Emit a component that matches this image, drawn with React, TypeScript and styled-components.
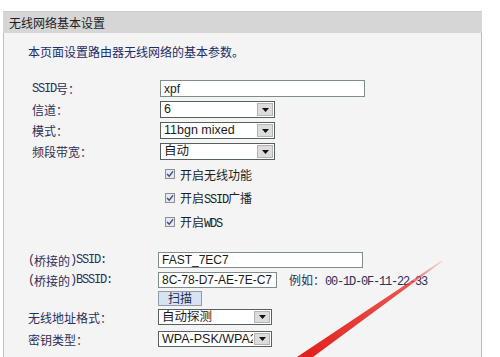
import React from "react";
import styled, { createGlobalStyle } from "styled-components";

const GlobalStyle = createGlobalStyle`
  html, body { margin: 0; padding: 0; background: #ffffff; overflow: hidden; }
  * { box-sizing: border-box; }
`;

const CJK = `"Noto Sans CJK SC", "Liberation Sans", sans-serif`;

const Page = styled.div`
  position: relative;
  width: 500px;
  height: 357px;
  padding-top: 11px;
  font-family: ${CJK};
  font-size: 12px;
`;

const Frame = styled.div`
  margin-left: 3px;
  width: 479px;
`;

const Header = styled.div`
  height: 22px;
  line-height: 22px;
  padding-left: 6px;
  background: #d6d6d6;
  border-top: 1px solid #cdcdcd;
  color: #1e1e1e;
  font-size: 12px;
`;

const Panel = styled.div`
  height: 324px;
  background: #f4f4f4;
  border-left: 1px solid #e6b97c;
  border-right: 1px solid #d9b383;
  padding-top: 9px;
`;

const Desc = styled.div`
  padding-left: 24px;
  line-height: 20px;
  height: 20px;
  color: #232c68;
  margin-bottom: 16px;
`;

const Table = styled.div<{ $indent: number; $label: number }>`
  display: grid;
  grid-template-columns: ${(p) => p.$label}px 1fr;
  padding-left: ${(p) => p.$indent}px;
`;

const Label = styled.div<{ $h: number }>`
  height: ${(p) => p.$h}px;
  display: flex;
  align-items: center;
  color: #2c3058;
  white-space: nowrap;
`;

const Cell = styled.div<{ $h: number }>`
  height: ${(p) => p.$h}px;
  display: flex;
  align-items: center;
  gap: 12px;
`;

const Latin = styled.span`
  font-family: "Liberation Mono", "DejaVu Sans Mono", monospace;
  font-size: 12px;
  letter-spacing: -1.2px;
`;

const TextBox = styled.div<{ $w: number; $h: number }>`
  width: ${(p) => p.$w}px;
  height: ${(p) => p.$h}px;
  background: #ffffff;
  border: 1px solid #7d8d8d;
  padding: 0 3px;
  display: flex;
  align-items: center;
  font-family: "Liberation Sans", "Noto Sans CJK SC", sans-serif;
  font-size: 12px;
  line-height: 1;
  color: #1a1a1a;
  white-space: nowrap;
  overflow: hidden;
`;

const SelectBox = styled.div<{ $w: number; $h: number }>`
  width: ${(p) => p.$w}px;
  height: ${(p) => p.$h}px;
  background: #ffffff;
  border: 1px solid #56615f;
  display: flex;
  align-items: stretch;
  font-family: "Liberation Sans", "Noto Sans CJK SC", sans-serif;
  font-size: 12.5px;
  line-height: 1;
  color: #1a1a1a;
`;

const SelectValue = styled.span`
  flex: 1;
  padding-left: 3px;
  display: flex;
  align-items: center;
  white-space: nowrap;
  overflow: hidden;
`;

const ArrowBox = styled.span`
  width: 16px;
  flex: none;
  margin: 1px;
  background: #dcdcdc;
  border: 1px solid #b4b4b4;
  display: flex;
  align-items: center;
  justify-content: center;
`;

const CheckRow = styled.div`
  display: flex;
  align-items: center;
  gap: 5px;
  padding-left: 5px;
  color: #1e1e1e;
`;

const CheckMark = styled.span`
  width: 10px;
  height: 10px;
  border: 1px solid #8c8f96;
  background: #e6e8ee;
  display: flex;
  align-items: center;
  justify-content: center;
`;

const Spacer = styled.div<{ $h: number }>`
  height: ${(p) => p.$h}px;
`;

const Hint = styled.span`
  color: #2c3058;
  white-space: nowrap;
`;

const ScanButton = styled.div`
  height: 15px;
  padding: 0 9px;
  display: flex;
  align-items: center;
  line-height: 1;
  background: #d5e3f3;
  border: 1px solid #8e9cab;
  color: #1e2a50;
  font-size: 12px;
`;

const Overlay = styled.svg`
  position: absolute;
  left: 0;
  top: 0;
  pointer-events: none;
`;

const Arrow = () => (
  <ArrowBox>
    <svg width="7" height="4" viewBox="0 0 7 4">
      <path d="M0 0 L7 0 L3.5 4 Z" fill="#111" />
    </svg>
  </ArrowBox>
);

const Select = ({ w, h, value }: { w: number; h: number; value: string }) => (
  <SelectBox $w={w} $h={h}>
    <SelectValue>{value}</SelectValue>
    <Arrow />
  </SelectBox>
);

const Check = ({ children }: { children: React.ReactNode }) => (
  <CheckRow>
    <CheckMark>
      <svg width="8" height="8" viewBox="0 0 8 8">
        <path d="M1 4 L3.2 6.2 L7 1.4" stroke="#3a4f8a" strokeWidth="1.5" fill="none" />
      </svg>
    </CheckMark>
    <span>{children}</span>
  </CheckRow>
);

export default function App() {
  return (
    <Page>
      <GlobalStyle />
      <Frame>
        <Header>无线网络基本设置</Header>
        <Panel>
          <Desc>本页面设置路由器无线网络的基本参数。</Desc>
          <Table $indent={28} $label={128}>
            <Label $h={21}>
              <Latin>SSID</Latin>号：
            </Label>
            <Cell $h={21}>
              <TextBox $w={205} $h={17}>xpf</TextBox>
            </Cell>
            <Label $h={21}>信道：</Label>
            <Cell $h={21}>
              <Select w={115} h={17} value="6" />
            </Cell>
            <Label $h={21}>模式：</Label>
            <Cell $h={21}>
              <Select w={115} h={17} value="11bgn mixed" />
            </Cell>
            <Label $h={21}>频段带宽：</Label>
            <Cell $h={21}>
              <Select w={115} h={17} value="自动" />
            </Cell>
            <Label $h={24} />
            <Cell $h={24}>
              <Check>开启无线功能</Check>
            </Cell>
            <Label $h={24} />
            <Cell $h={24}>
              <Check>
                开启<Latin>SSID</Latin>广播
              </Check>
            </Cell>
            <Label $h={24} />
            <Cell $h={24}>
              <Check>
                开启<Latin>WDS</Latin>
              </Check>
            </Cell>
          </Table>
          <Spacer $h={16} />
          <Table $indent={24} $label={130}>
            <Label $h={20}>
              <Latin>(</Latin>桥接的<Latin>)SSID:</Latin>
            </Label>
            <Cell $h={20}>
              <TextBox $w={205} $h={16}>FAST_7EC7</TextBox>
            </Cell>
            <Label $h={20}>
              <Latin>(</Latin>桥接的<Latin>)BSSID:</Latin>
            </Label>
            <Cell $h={20}>
              <TextBox $w={119} $h={16}>8C-78-D7-AE-7E-C7</TextBox>
              <Hint>
                例如：<Latin>00-1D-0F-11-22-33</Latin>
              </Hint>
            </Cell>
            <Label $h={16} />
            <Cell $h={16}>
              <ScanButton>扫描</ScanButton>
            </Cell>
            <Label $h={22}>无线地址格式：</Label>
            <Cell $h={22}>
              <Select w={114} h={16} value="自动探测" />
            </Cell>
            <Label $h={22}>密钥类型：</Label>
            <Cell $h={22}>
              <Select w={114} h={16} value="WPA-PSK/WPA2-PSK" />
            </Cell>
          </Table>
        </Panel>
      </Frame>
      <Overlay width="500" height="357" viewBox="0 0 500 357">
        <defs>
          <linearGradient id="redline" x1="443" y1="261" x2="305" y2="357" gradientUnits="userSpaceOnUse">
            <stop offset="0" stopColor="#f08080" stopOpacity="0.3" />
            <stop offset="0.25" stopColor="#e83a36" stopOpacity="0.85" />
            <stop offset="1" stopColor="#e0201c" />
          </linearGradient>
        </defs>
        <polygon points="443,261 313,357 297,357 441,261" fill="url(#redline)" />
      </Overlay>
    </Page>
  );
}
